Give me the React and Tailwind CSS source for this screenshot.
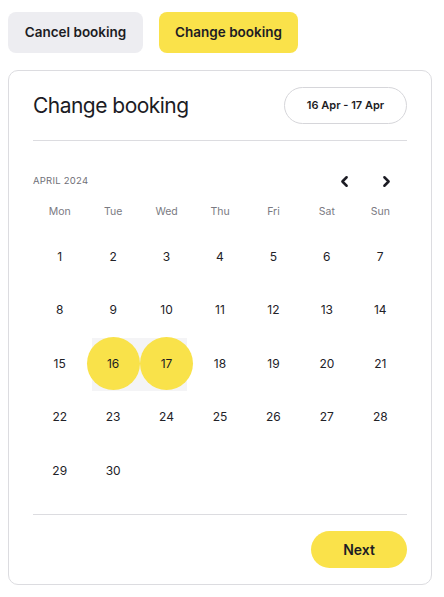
import React from "react";
import { ChevronLeft, ChevronRight } from "lucide-react";

const days = ["Mon", "Tue", "Wed", "Thu", "Fri", "Sat", "Sun"];

// April 2024 starts on a Monday
const weeks = [
  [1, 2, 3, 4, 5, 6, 7],
  [8, 9, 10, 11, 12, 13, 14],
  [15, 16, 17, 18, 19, 20, 21],
  [22, 23, 24, 25, 26, 27, 28],
  [29, 30, null, null, null, null, null],
];

const rangeStart = 16;
const rangeEnd = 17;

const DayCell = ({ day }) => {
  const isSelected = day >= rangeStart && day <= rangeEnd;
  const isStart = day === rangeStart;
  const isEnd = day === rangeEnd;
  return (
    <div className="h-[53.5px] flex items-center justify-center relative">
      {isSelected && (
        <div
          className={`absolute top-[0.5px] bottom-0 bg-[#f4f4f6] ${
            isStart ? "left-[6px] right-0" : isEnd ? "left-0 right-[6px]" : "left-0 right-0"
          }`}
        />
      )}
      {day && (
        <span
          className={`relative w-[53px] h-[53px] flex items-center justify-center rounded-full text-[12px] ${
            isSelected ? "bg-[#f9e24a] text-[#1c1c24]" : "text-[#222228]"
          }`}
        >
          {day}
        </span>
      )}
    </div>
  );
};

const App = () => {
  return (
    <div
      className="w-[444px] h-[597px] bg-white px-2 pt-3 text-[#1c1c24]"
      style={{ fontFamily: "Inter, 'Noto Sans', sans-serif" }}
    >
      {/* Top actions */}
      <div className="flex gap-4">
        <button className="w-[135px] h-[41px] rounded-lg bg-[#ededf1] text-[13.5px] font-semibold">
          Cancel booking
        </button>
        <button className="w-[139px] h-[41px] rounded-lg bg-[#fae24a] text-[13.5px] font-semibold">
          Change booking
        </button>
      </div>

      {/* Card */}
      <div className="mt-[17px] w-[424px] rounded-[10px] border border-[#dcdce0] px-[24px] pt-[16px] pb-[16px]">
        <div className="flex items-center justify-between h-[37px]">
          <h1 className="text-[21px] font-normal tracking-tight">Change booking</h1>
          <div className="w-[123px] h-[37px] rounded-full border border-[#d6d6da] flex items-center justify-center text-[11px] font-semibold">
            16 Apr - 17 Apr
          </div>
        </div>

        <div className="mt-4 h-px bg-[#dcdce0]" />

        <div className="mt-[30px] h-[20px] flex items-center justify-between">
          <span className="text-[9.5px] text-[#707078] tracking-wide">APRIL 2024</span>
          <div className="flex items-center gap-[25px] pr-[12px]">
            <ChevronLeft size={17} strokeWidth={3.5} />
            <ChevronRight size={17} strokeWidth={3.5} />
          </div>
        </div>

        <div className="mt-[3px] grid grid-cols-7 h-[36px] items-center">
          {days.map((d) => (
            <span key={d} className="text-center text-[10.5px] text-[#7a7a82]">
              {d}
            </span>
          ))}
        </div>

        <div className="grid grid-cols-7">
          {weeks.flat().map((day, i) => (
            <DayCell key={i} day={day} />
          ))}
        </div>

        <div className="mt-[16px] h-px bg-[#dcdce0]" />

        <div className="mt-4 flex justify-end">
          <button className="w-[96px] h-[37px] rounded-full bg-[#fae24a] text-[14px] font-semibold">
            Next
          </button>
        </div>
      </div>
    </div>
  );
};

export default App;
